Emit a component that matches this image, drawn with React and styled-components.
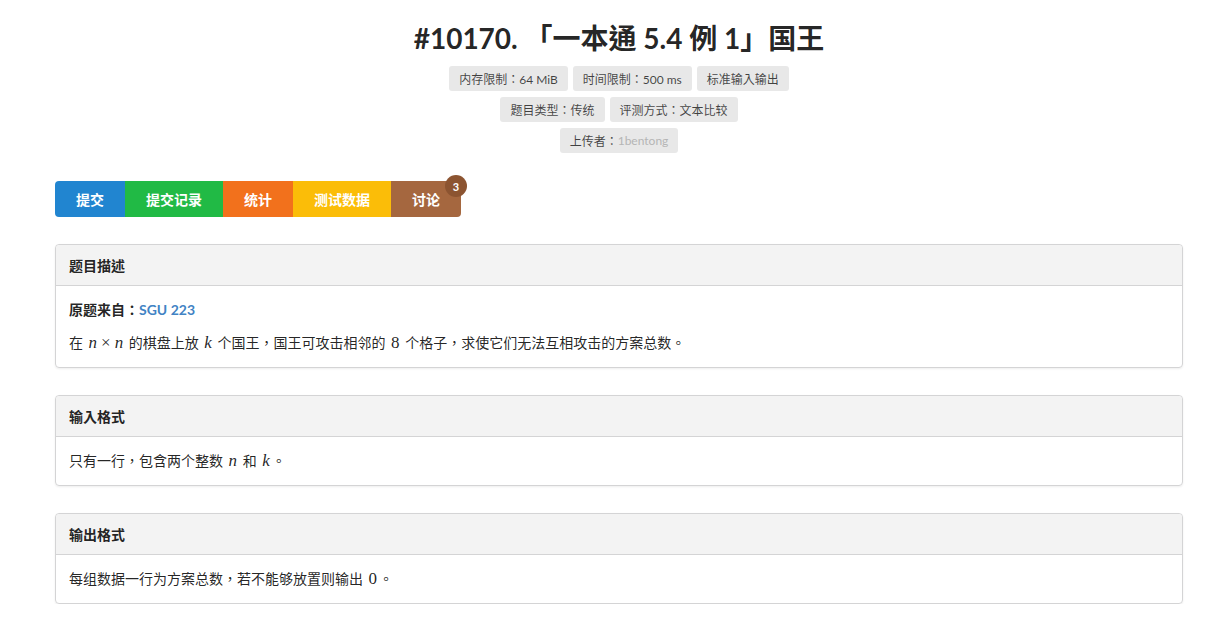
import React from 'react'
import styled, { createGlobalStyle } from 'styled-components'

const GlobalStyle = createGlobalStyle`
body {
  margin: 0;
  background: #fff;
  font-family: Lato, "Noto Sans CJK TC", sans-serif;
  font-size: 14px;
  color: rgba(0, 0, 0, 0.87);
}
`

const Page = styled.div`
width: 1128px;
margin: 0 0 0 55px;
padding-top: 19px;
`

const Title = styled.h1`
margin: 0;
text-align: center;
font-size: 28px;
font-weight: 700;
line-height: 38px;
color: rgba(0, 0, 0, 0.87);
`

const LabelRows = styled.div`
margin-top: 9px;
display: flex;
flex-direction: column;
align-items: center;
gap: 6px;
`

const LabelRow = styled.div`
display: flex;
gap: 5px;
`

const Label = styled.span`
display: inline-flex;
align-items: center;
height: 25px;
padding: 0 10px;
border-radius: 3px;
background: #e8e8e8;
font-size: 12px;
color: rgba(0, 0, 0, 0.72);
`

const Muted = styled.span`
color: #b5b5b5;
`

const ButtonBar = styled.div`
margin-top: 28px;
display: flex;
`

const Button = styled.a`
position: relative;
display: flex;
align-items: center;
height: 36px;
padding: 0 21px;
background: ${p => p.color};
color: #fff;
font-size: 14px;
font-weight: 700;
text-decoration: none;
&:first-child { border-radius: 4px 0 0 4px; }
&:last-child { border-radius: 0 4px 4px 0; }
`

const Badge = styled.span`
position: absolute;
top: -6px;
right: -6px;
width: 22px;
height: 22px;
border-radius: 50%;
background: #8c5431;
color: #fff;
font-size: 11px;
font-weight: 700;
display: flex;
align-items: center;
justify-content: center;
`

const Segments = styled.div`
margin-top: 27px;
display: flex;
flex-direction: column;
gap: 27px;
`

const Segment = styled.div`
border: 1px solid #d4d4d5;
border-radius: 4px;
box-shadow: 0 1px 2px rgba(34, 36, 38, 0.08);
`

const SegmentHeader = styled.div`
height: 40px;
display: flex;
align-items: center;
padding: 0 13px;
background: #f3f3f3;
border-bottom: 1px solid #d4d4d5;
border-radius: 4px 4px 0 0;
font-weight: 700;
font-size: 14px;
`

const SegmentBody = styled.div`
padding: 14px 13px;
`

const Para = styled.p`
margin: 0;
line-height: 20px;
& + & { margin-top: 13px; }
`

const Link = styled.a`
color: #4183c4;
font-weight: 700;
text-decoration: none;
`

const M = styled.span`
font-family: "Liberation Serif", "DejaVu Serif", serif;
font-style: ${p => (p.upright ? 'normal' : 'italic')};
font-size: 17px;
padding: 0 2px;
`

const buttons = [
  { text: '提交', color: '#2185d0' },
  { text: '提交记录', color: '#21ba45' },
  { text: '统计', color: '#f2711c' },
  { text: '测试数据', color: '#fbbd08' },
  { text: '讨论', color: '#a5673f', badge: 3 },
]

export default function App() {
  return (
    <Page>
      <GlobalStyle />
      <Title>#10170. 「一本通 5.4 例 1」国王</Title>
      <LabelRows>
        <LabelRow>
          <Label>内存限制：64 MiB</Label>
          <Label>时间限制：500 ms</Label>
          <Label>标准输入输出</Label>
        </LabelRow>
        <LabelRow>
          <Label>题目类型：传统</Label>
          <Label>评测方式：文本比较</Label>
        </LabelRow>
        <LabelRow>
          <Label>上传者：<Muted>1bentong</Muted></Label>
        </LabelRow>
      </LabelRows>
      <ButtonBar>
        {buttons.map(b => (
          <Button key={b.text} color={b.color} href="#">
            {b.text}
            {b.badge && <Badge>{b.badge}</Badge>}
          </Button>
        ))}
      </ButtonBar>
      <Segments>
        <Segment>
          <SegmentHeader>题目描述</SegmentHeader>
          <SegmentBody>
            <Para><b>原题来自：</b><Link href="#">SGU 223</Link></Para>
            <Para>
              在 <M>n</M><M upright>×</M><M>n</M> 的棋盘上放 <M>k</M> 个国王，国王可攻击相邻的 <M upright>8</M> 个格子，求使它们无法互相攻击的方案总数。
            </Para>
          </SegmentBody>
        </Segment>
        <Segment>
          <SegmentHeader>输入格式</SegmentHeader>
          <SegmentBody>
            <Para>只有一行，包含两个整数 <M>n</M> 和 <M>k</M>。</Para>
          </SegmentBody>
        </Segment>
        <Segment>
          <SegmentHeader>输出格式</SegmentHeader>
          <SegmentBody>
            <Para>每组数据一行为方案总数，若不能够放置则输出 <M upright>0</M>。</Para>
          </SegmentBody>
        </Segment>
      </Segments>
    </Page>
  )
}
